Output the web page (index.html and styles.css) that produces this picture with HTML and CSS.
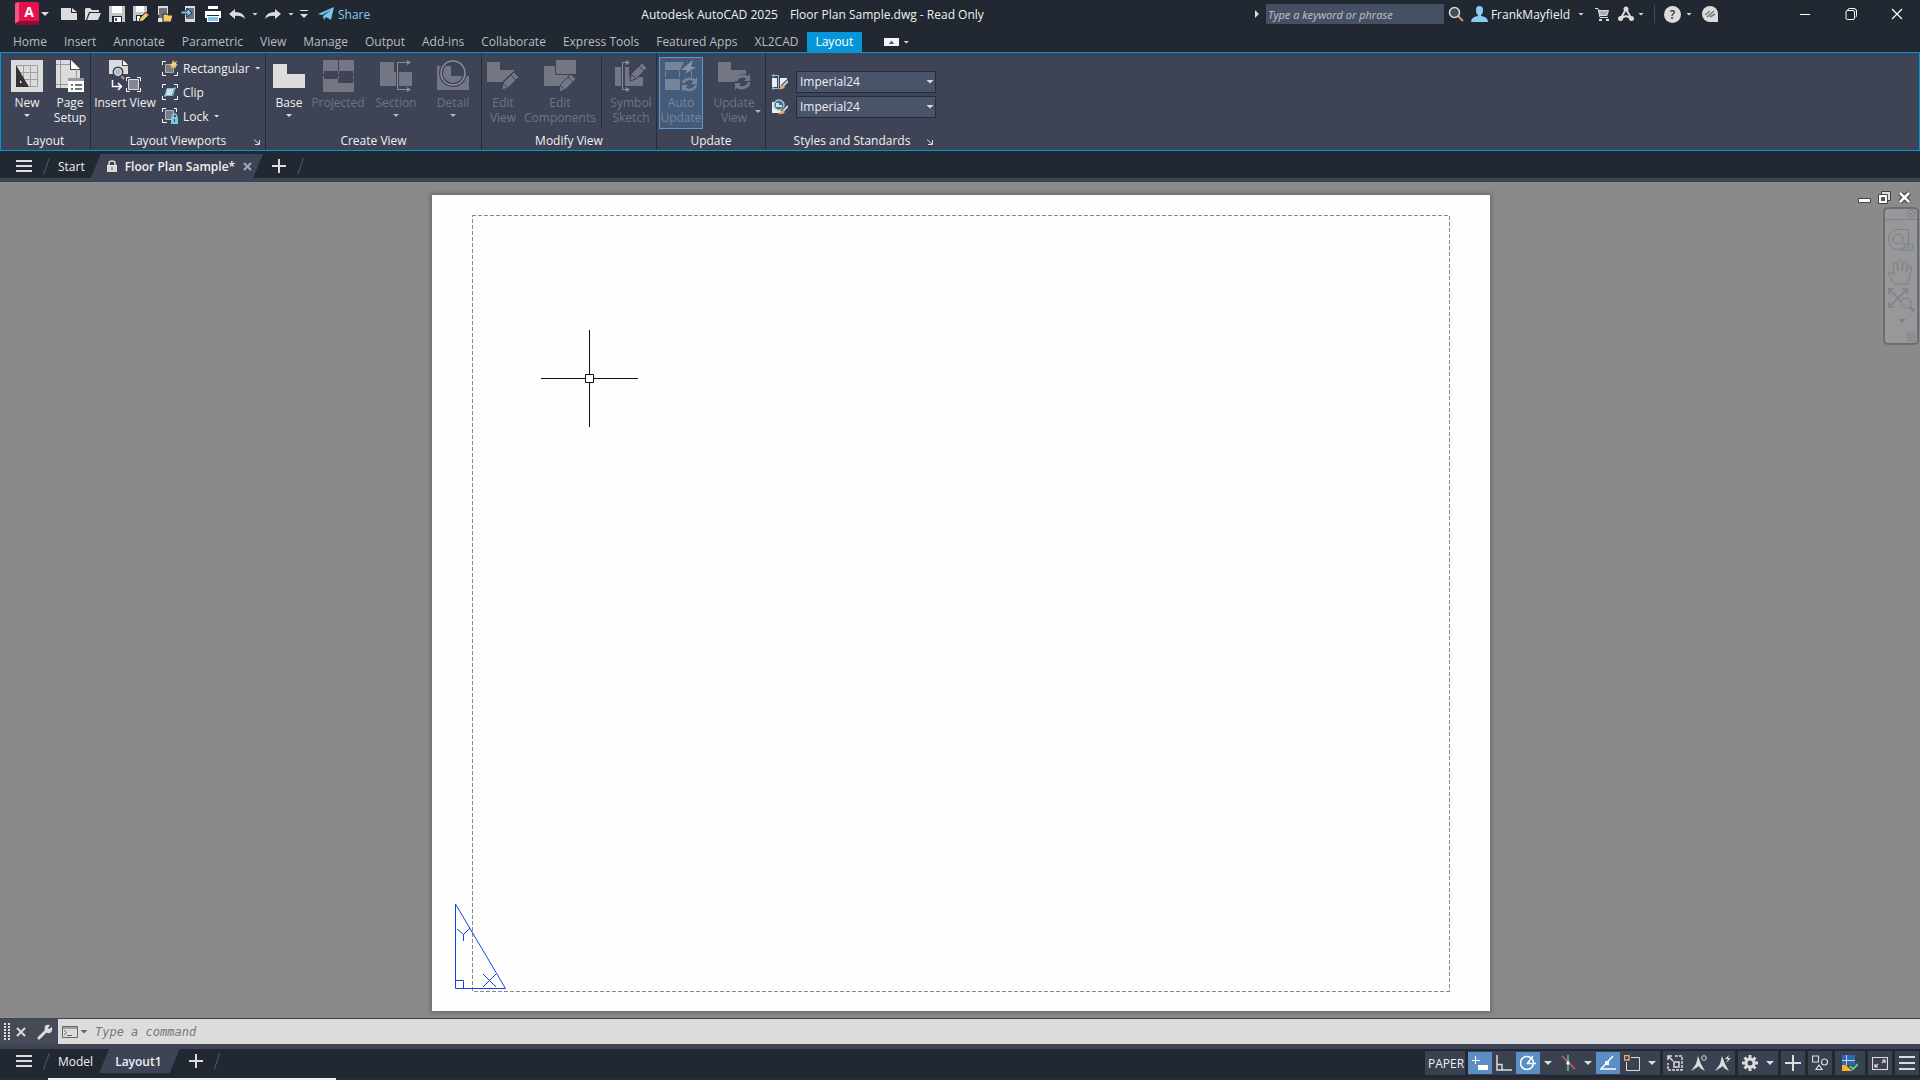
FILE: index.html
```html
<!DOCTYPE html>
<html lang="en">
<head>
    <meta charset="UTF-8">
    <title>Autodesk AutoCAD 2025 - Floor Plan Sample.dwg</title>
    <link rel="stylesheet" href="styles.css">
</head>
<body>
    <header class="titlebar">
        <div class="quick-access">
            <button class="app-button" aria-label="Application menu">
                <svg width="24" height="24" viewBox="0 0 24 24"><path fill="#e51050" d="M0 2Q0 0 2 0H22Q24 0 24 2V20H0z"/><path fill="#f0597f" d="M0 2L4 0V19L0 22z"/><path fill="#8e0d33" d="M0 22L4 19H24V21Q24 23 22 23H2z"/></svg>
                <span class="app-letter">A</span>
            </button>
            <button class="drop" aria-label="Application options"><i class="caret big"></i></button>
            <button class="qa first" aria-label="New"><svg viewBox="0 0 16 16"><path fill="#dcdcdc" d="M0 2H10V7H16V14H0z"/><path fill="#dcdcdc" d="M11 2L16 6H11z"/></svg></button>
            <button class="qa" aria-label="Open"><svg viewBox="0 0 16 16"><path fill="#dcdcdc" d="M0 14V3L1 2H5L7 4H14V6H4L1 14z"/><path fill="#dcdcdc" d="M5 7H16L13 14H2z"/></svg></button>
            <button class="qa" aria-label="Save"><svg viewBox="0 0 16 16"><path fill="#c4c5c8" d="M0 0H16V16H0z"/><path fill="#fff" d="M3 0H13V7H3z"/><path fill="#222933" d="M3 10H13V16H3z"/><path fill="#fff" d="M5 11H12V16H5z"/><path fill="#555" d="M6 12H8V15H6z"/></svg></button>
            <button class="qa" aria-label="Save As"><svg viewBox="0 0 16 16"><path fill="#c4c5c8" d="M0 0H14V8L8 15H0z"/><path fill="#fff" d="M3 0H11V6H3z"/><path fill="#222933" d="M3 9H10L6 15H3z"/><path fill="#fff" d="M4 10H7V15H4z"/><path fill="#f3c766" stroke="#222933" d="M7 12L13 6L16 9L10 15L6 16z"/><path fill="#ec6b76" d="M12 7L13 6L16 9L15 10z"/></svg></button>
            <button class="qa" aria-label="Open from Web and Mobile"><svg viewBox="0 0 16 16"><path fill="#dcdcdc" d="M1 0H11V9H1z"/><path fill="#71757e" d="M2 2H10V12H2z"/><path fill="#dcdcdc" d="M1 12H7V16H1z"/><path fill="#f3c766" stroke="#222933" d="M6 8H10L11 9H16L14 16H6z"/></svg></button>
            <button class="qa" aria-label="Save to Web and Mobile"><svg viewBox="0 0 16 16"><path fill="#dcdcdc" d="M4 0H14V16H4z"/><path fill="#71757e" d="M5 2H13V13H5z"/><path fill="#79c5ee" stroke="#222933" d="M0 5H6V2L11 7L6 11V8H0z"/></svg></button>
            <button class="qa" aria-label="Plot"><svg viewBox="0 0 16 16"><path fill="#fff" d="M3 0H13V3H3zM0 5H16V12H0z"/><path fill="#222933" d="M2 9H14V12H2z"/><path fill="#fff" d="M2 10H14V16H2z"/><path fill="#79c5ee" d="M3 11H13V15H3z"/></svg></button>
            <button class="qa" aria-label="Undo"><svg viewBox="0 0 16 16"><path fill="#dcdcdc" d="M0 8L6 3V6Q15 6 16 13Q12 9 6 10V13z"/></svg></button>
            <button class="drop" aria-label="Undo list"><i class="caret"></i></button>
            <button class="qa" aria-label="Redo"><svg viewBox="0 0 16 16"><path fill="#dcdcdc" d="M16 8L10 3V6Q1 6 0 13Q4 9 10 10V13z"/></svg></button>
            <button class="drop" aria-label="Redo list"><i class="caret"></i></button>
            <button class="drop wide" aria-label="Customize toolbar"><i class="caret over"></i></button>
            <button class="share">
                <svg width="16" height="16" viewBox="0 0 16 16"><path fill="#79c5ee" d="M0 8L16 1L13 14L8 11L6 14L5 10L13 4L4 9z"/></svg>
                Share
            </button>
        </div>
        <div class="title"><span>Autodesk AutoCAD 2025</span><span>Floor Plan Sample.dwg - Read Only</span></div>
        <div class="account">
            <i class="arrow-right"></i>
            <input class="search" type="text" placeholder="Type a keyword or phrase" aria-label="Search help">
            <button class="acc-icon" aria-label="Search"><svg viewBox="0 0 16 16"><path stroke="#c89a70" stroke-width="2" d="M10 10L15 15"/><circle cx="6.500" cy="6.500" r="5" fill="#444b59" stroke="#dcdcdc" stroke-width="1.500"/></svg></button>
            <button class="user">
                <svg width="17" height="17" viewBox="0 0 17 17"><path fill="#8bcdf0" d="M5 4Q5 0 8.500 0Q12 0 12 4Q12 8 10 9V10Q17 11 17 16H0Q0 11 7 10V9Q5 8 5 4z"/></svg>
                FrankMayfield
                <i class="caret"></i>
            </button>
            <button class="acc-icon" aria-label="App Store"><svg viewBox="0 0 16 16"><path fill="none" stroke="#dcdcdc" d="M1 2.500H4L6 11.500H14"/><path fill="#aaadb3" stroke="#dcdcdc" d="M5 4.500H14.500L13 9.500H6z"/><path fill="#dcdcdc" d="M5 13H8V15H5zM12 13H15V15H12z"/></svg></button>
            <button class="acc-icon" aria-label="Autodesk services"><svg viewBox="0 0 16 16"><path fill="none" stroke="#dcdcdc" stroke-width="2" d="M8 3L3 12M8 3L13 12M3 12L8 10L13 12"/><circle cx="8" cy="3" r="2.500" fill="#dcdcdc"/><circle cx="2.500" cy="12.500" r="2.500" fill="#dcdcdc"/><circle cx="13.500" cy="12.500" r="2.500" fill="#dcdcdc"/></svg></button>
            <button class="drop" aria-label="Services list"><i class="caret"></i></button>
            <i class="divider"></i>
            <button class="help" aria-label="Help">?</button>
            <button class="drop" aria-label="Help list"><i class="caret"></i></button>
            <button class="acc-icon" aria-label="Assistant"><svg viewBox="0 0 16 16"><path fill="#dcdcdc" d="M8 0A8 8 0 0 1 16 8V16H8A8 8 0 0 1 8 0"/><path stroke="#777" stroke-width="1.500" d="M3 9L8 5M5 11L12 5M8 11L13 8"/></svg></button>
        </div>
        <div class="window-buttons">
            <button aria-label="Minimize"><svg viewBox="0 0 12 12"><path stroke="#fff" d="M1 6.500H11"/></svg></button>
            <button aria-label="Restore"><svg viewBox="0 0 12 12"><path fill="none" stroke="#fff" d="M3 2V1.500Q3 .5 4.500 .5H9Q11.500 .5 11.500 3V7.500Q11.500 9 10.500 9M2 2.500H8Q9.500 2.500 9.500 4V10Q9.500 11.500 8 11.500H2.500Q1 11.500 1 10V4Q1 2.500 2.500 2.500"/></svg></button>
            <button aria-label="Close"><svg viewBox="0 0 12 12"><path stroke="#fff" stroke-width="1.200" d="M1 1L11 11M11 1L1 11"/></svg></button>
        </div>
    </header>

    <nav class="ribbon-tabs">
        <a href="#">Home</a>
        <a href="#">Insert</a>
        <a href="#">Annotate</a>
        <a href="#">Parametric</a>
        <a href="#">View</a>
        <a href="#">Manage</a>
        <a href="#">Output</a>
        <a href="#">Add-ins</a>
        <a href="#">Collaborate</a>
        <a href="#">Express Tools</a>
        <a href="#">Featured Apps</a>
        <a href="#">XL2CAD</a>
        <a href="#" class="active">Layout</a>
        <button class="ribbon-toggle" aria-label="Minimize ribbon"><svg width="15" height="8" viewBox="0 0 15 8"><path fill="#f4f4f4" d="M0 0H15V8H0z"/><path fill="#555" d="M5 6L7.500 2.500L10 6z"/></svg><i class="caret"></i></button>
    </nav>

    <section class="ribbon">
        <div class="panel p-layout">
            <div class="tools">
                <button class="tool">
                    <svg viewBox="0 0 32 32"><path fill="#dcdcdc" d="M0 0H32V32H0z"/><path fill="none" stroke="#a0a0a0" d="M5.500 5.500H26.500V26.500H5.500zM12.500 5V27M19.500 5V27M5 12.500H27M5 19.500H27"/><path fill="#333" d="M5 5L18 27H5z"/><path fill="#fff" d="M9 20L11 23H9z"/></svg>
                    <span>New</span><i class="caret"></i>
                </button>
                <button class="tool">
                    <svg viewBox="0 0 32 32"><path fill="#dcdcdc" d="M2 0H16V10H26V18H14V28H2z"/><path fill="#fff" d="M17 0L26 9H17z"/><path fill="none" stroke="#999" d="M6.500 0V28M2 4.500H16M2 24.500H14M22.500 9V18"/><path fill="#fff" d="M14 18H30V32H14z"/><path fill="#999" d="M14 18H30V21H14z"/><path stroke="#444" stroke-width="1.500" d="M17 25H19M21 25H28M17 29H19M21 29H28"/></svg>
                    <span>Page<br>Setup</span>
                </button>
            </div>
            <h2>Layout</h2>
        </div>

        <div class="panel p-viewports">
            <div class="tools">
                <button class="tool">
                    <svg viewBox="0 0 32 32"><path fill="#dcdcdc" d="M0 0H13V6H19V14H0z"/><path fill="#fff" d="M14 0L19 5H14z"/><path stroke="#c89a70" stroke-width="2" d="M11 15L15 19"/><circle cx="9" cy="12" r="4.500" fill="#a8bbc7" stroke="#3e4455" stroke-width="2"/><circle cx="9" cy="12" r="3.500" fill="none" stroke="#eee"/><path fill="none" stroke="#fff" stroke-width="1.500" d="M3.500 20V26.500H12M9 23L12.500 26.500L9 30"/><path fill="#858894" stroke="#dcdcdc" d="M19.500 19.500H29.500V29.500H19.500z"/><path fill="none" stroke="#fff" d="M17.500 21V17.500H21M28 17.500H31.500V21M31.500 28V31.500H28M21 31.500H17.500V28"/></svg>
                    <span>Insert View</span>
                </button>
                <div class="small-tools">
                    <button><svg viewBox="0 0 16 16"><path fill="#777b86" stroke="#aaa" d="M3.500 4.500H11.500V12.500H3.500z"/><path fill="none" stroke="#fff" d="M.5 5V1.500H4M.5 12V15.500H4M12 15.500H15.500V12"/><path fill="#f5cf76" d="M11 0L12.500 2.500L15 1L14 4L16 5L13.500 6L14 8.500L11.500 7L9 8.500L9.500 6L7 4.500L10 3.500z"/></svg>Rectangular<i class="caret"></i></button>
                    <button><svg viewBox="0 0 16 16"><path fill="#dcdcdc" d="M5 5H12L10 11H3z"/><path fill="none" stroke="#6cc9eb" d="M2 11.500H11L13 3M14 4.500H5L3 13"/><path fill="none" stroke="#fff" d="M.5 4V.5H4M12 .5H15.500V4M15.500 12V15.500H12M4 15.500H.5V12"/></svg>Clip</button>
                    <button><svg viewBox="0 0 16 16"><path fill="#777b86" stroke="#bbb" d="M3.500 2.500H11.500V11.500H3.500z"/><path fill="none" stroke="#fff" d="M.5 4V.5H4M12 .5H14.500V4M5 14.500H.5V11"/><path fill="#70cde4" d="M9 9H16V16H9z"/><path fill="none" stroke="#70cde4" stroke-width="1.500" d="M10.500 10V7Q12.500 5 14.500 7V10"/><path fill="#3e4455" d="M12 11H13V14H12z"/></svg>Lock<i class="caret"></i></button>
                </div>
            </div>
            <h2>Layout Viewports</h2>
            <button class="launcher" aria-label="Layout Viewports dialog"><svg viewBox="0 0 6 6"><path fill="none" stroke="#dcdcdc" d="M0 .5L5 5M1 5.500H5.500V1"/></svg></button>
        </div>

        <div class="panel p-create">
            <div class="tools">
                <button class="tool">
                    <svg viewBox="0 0 32 32"><path fill="#dcdcdc" d="M0 4H14V14H32V28H0z"/></svg>
                    <span>Base</span><i class="caret"></i>
                </button>
                <button class="tool" disabled>
                    <svg viewBox="0 0 32 32"><path fill="#737783" d="M1 0H16V11H1zM17 0H32V11H17zM1 19H16V23H32V32H1z"/><path stroke="#737783" stroke-dasharray="3 2" d="M1.500 11V19M16.500 11V19M31.500 11V23"/></svg>
                    <span>Projected</span>
                </button>
                <button class="tool" disabled>
                    <svg viewBox="0 0 32 32"><path fill="#737783" d="M0 2H14V12H16V26H0zM19 12H32V26H19z"/><path fill="none" stroke="#8b8e98" d="M27 2.500H17.500V29.500H27"/><path fill="#8b8e98" d="M27 0L31 2.500L27 5zM27 27L31 29.500L27 32z"/></svg>
                    <span>Section</span><i class="caret"></i>
                </button>
                <button class="tool" disabled>
                    <svg viewBox="0 0 32 32"><path fill="#737783" d="M0 6H14V16H32V30H0z"/><circle cx="16" cy="13" r="12" fill="none" stroke="#3e4455" stroke-width="4"/><circle cx="16" cy="13" r="12" fill="none" stroke="#8b8e98" stroke-width="1.500"/></svg>
                    <span>Detail</span><i class="caret"></i>
                </button>
            </div>
            <h2>Create View</h2>
        </div>

        <div class="panel p-modify">
            <div class="tools">
                <button class="tool" disabled>
                    <svg viewBox="0 0 32 32"><path fill="#737783" d="M0 2H13V10H28L15 22H0z"/><path fill="#737783" stroke="#3e4455" d="M16 23L27 12L32 17L21 28L15 30z"/><path stroke="#3e4455" d="M24 15L29 20M16 23L21 28"/></svg>
                    <span>Edit<br>View</span>
                </button>
                <button class="tool" disabled>
                    <svg viewBox="0 0 32 32"><path fill="#737783" d="M0 6H11V15H29L18 26H0z"/><path fill="#737783" stroke="#3e4455" d="M11.500 -.5H32.500V14.500H11.500z"/><path fill="#737783" stroke="#3e4455" d="M16 25L27 14L32 19L21 30L15 32z"/><path stroke="#3e4455" d="M24 17L29 22M16 25L21 30"/></svg>
                    <span>Edit<br>Components</span>
                </button>
                <i class="tool-divider"></i>
                <button class="tool" disabled>
                    <svg viewBox="0 0 32 32"><path fill="#737783" d="M0 7H6V26H0zM10 7H14V17H28V26H10z"/><path fill="none" stroke="#8b8e98" d="M11 2.500H7.500V29.500H11"/><path fill="#8b8e98" d="M11 0L15 2.500L11 5zM11 27L15 29.500L11 32z"/><path fill="#737783" stroke="#3e4455" d="M16 14L27 3L32 8L21 19L15 21z"/><path stroke="#3e4455" d="M24 6L29 11M16 14L21 19"/></svg>
                    <span>Symbol<br>Sketch</span>
                </button>
            </div>
            <h2>Modify View</h2>
        </div>

        <div class="panel p-update">
            <div class="tools">
                <button class="tool pressed" disabled>
                    <svg viewBox="0 0 32 32"><path fill="#77859b" d="M0 2H19L15 10H0zM0 19H15V30H0z"/><path stroke="#77859b" stroke-dasharray="6 2" d="M.5 11V18M14.500 11V18M26.500 11V18"/><path fill="#8794a8" d="M28 0L16 10H22L20 14L31 7H26z"/><path fill="none" stroke="#77859b" stroke-width="2.500" d="M18 23A7 6 0 0 1 30 21M31 25A7 6 0 0 1 19 28"/><path fill="#77859b" d="M32 17V24H26zM17 32V25H23z"/></svg>
                    <span>Auto<br>Update</span>
                </button>
                <button class="tool" disabled>
                    <svg viewBox="0 0 32 32"><path fill="#737783" d="M0 2H13V10H28V14Q18 13 17 22H0z"/><path fill="none" stroke="#737783" stroke-width="3" d="M18 21A7 6 0 0 1 30 18M31 22A7 6 0 0 1 19 26"/><path fill="#737783" d="M32 14V21H26zM17 30V23H23z"/></svg>
                    <span>Update<br>View</span><i class="caret side"></i>
                </button>
            </div>
            <h2>Update</h2>
        </div>

        <div class="panel p-styles">
            <div class="style-rows">
                <label for="section-style"><svg viewBox="0 0 16 16"><path fill="#eee" d="M0 4H5V13H0zM8 4H15V9L11 13H8z"/><path fill="none" stroke="#79c5ee" d="M0 1.500H6.500V14.500H0M2 0L0 1.500L2 3M2 13L0 14.500L2 16"/><path stroke="#3e4455" stroke-width="4" d="M16 7L10 13"/><path stroke="#d0d0d0" stroke-width="2" d="M16 7L11 12"/><path fill="#e9a564" d="M11 11L13 13Q11 16 6 15Q9 14 9 12z"/></svg></label>
                <span class="select-wrap"><select id="section-style"><option>Imperial24</option></select><i class="caret big"></i></span>
                <label for="detail-style"><svg viewBox="0 0 16 16"><path fill="#eee" d="M0 3H3V9H12L8 14H0z"/><circle cx="7" cy="6" r="5" fill="#59677b" stroke="#8bd0f0" stroke-width="1.500"/><path fill="#dcdcdc" d="M4 4H7V6H10V8H4z"/><path stroke="#3e4455" stroke-width="4" d="M16 7L10 13"/><path stroke="#d0d0d0" stroke-width="2" d="M16 7L11 12"/><path fill="#e9a564" d="M11 11L13 13Q11 16 6 15Q9 14 9 12z"/></svg></label>
                <span class="select-wrap"><select id="detail-style"><option>Imperial24</option></select><i class="caret big"></i></span>
            </div>
            <h2>Styles and Standards</h2>
            <button class="launcher" aria-label="Styles and Standards dialog"><svg viewBox="0 0 6 6"><path fill="none" stroke="#dcdcdc" d="M0 .5L5 5M1 5.500H5.500V1"/></svg></button>
        </div>
    </section>

    <nav class="file-tabs">
        <button class="hamburger" aria-label="File tab menu"><svg width="16" height="12" viewBox="0 0 16 12"><path fill="#dcdcdc" d="M0 0H16V2H0zM0 5H16V7H0zM0 10H16V12H0z"/></svg></button>
        <i class="slash"></i>
        <a href="#">Start</a>
        <a href="#" class="current">
            <svg width="10" height="12" viewBox="0 0 10 12"><path fill="#dcdcdc" d="M0 5H10V12H0z"/><path fill="none" stroke="#dcdcdc" stroke-width="1.500" d="M2 6V3Q2 1 5 1Q8 1 8 3V6"/><path fill="#555" d="M4.500 7H5.500V10H4.500z"/></svg>
            Floor Plan Sample*
            <svg class="close" width="9" height="9" viewBox="0 0 9 9"><path stroke="#a5a8b0" stroke-width="2" d="M1 1L8 8M8 1L1 8"/></svg>
        </a>
        <button class="plus" aria-label="New drawing"><svg width="14" height="14" viewBox="0 0 14 14"><path fill="#dcdcdc" d="M6 0H8V6H14V8H8V14H6V8H0V6H6z"/></svg></button>
        <i class="slash"></i>
    </nav>

    <main class="canvas">
        <div class="sheet">
            <svg class="margins"><rect width="100%" height="100%"/></svg>
            <svg class="ucs" viewBox="0 0 52 87"><path d="M.5 1V85.500H50.500zM.5 77.500H8.500V85.500M2 26L8.500 31.500L15 25M8.500 31.500V38M28 71L41 84M41 71L28 84"/></svg>
        </div>
        <svg class="crosshair" viewBox="0 0 97 97"><path d="M0 48.500H44M53 48.500H97M48.500 0V44M48.500 53V97M44.500 44.500H52.500V52.500H44.500z"/></svg>
        <div class="doc-buttons">
            <button aria-label="Minimize drawing"><svg viewBox="0 0 13 13"><path fill="#fff" stroke="#444" d="M.5 7.500H12.500V11.500H.5z"/></svg></button>
            <button aria-label="Restore drawing"><svg viewBox="0 0 13 13"><path fill="#ddd" stroke="#444" d="M3.500 .5H12.500V9.500H3.500z"/><path fill="#fff" stroke="#444" d="M.5 3.500H9.500V12.500H.5z"/><path fill="#555" d="M3 6H7V10H3z"/></svg></button>
            <button aria-label="Close drawing"><svg viewBox="0 0 13 13"><path stroke="#444" stroke-width="5" d="M2 2L11 11M11 2L2 11"/><path stroke="#fff" stroke-width="2.500" d="M2 2L11 11M11 2L2 11"/></svg></button>
        </div>
        <div class="navbar">
            <svg width="32" height="134" viewBox="0 0 32 134"><g fill="none" stroke="#808084"><path d="M0 10.500H32"/><circle cx="26" cy="5" r="4"/><path d="M24 3L28 7M28 3L24 7"/><path d="M13 20.500H23.500V31A10 10 0 1 1 13 20.500"/><circle cx="13" cy="30" r="5"/><path d="M9 75Q6 68 3 64Q5 61 9 66L8 55Q11 52 12 56L13 62L13 52Q16 49 17 53V62L19 53Q22 51 22 55L21 63L24 57Q28 56 26 61L23 75z"/><path stroke-width="1.500" d="M5 81L21 97M21 81L5 97M4 85V80H9M17 80H22V85M4 93V98H9"/><circle cx="21" cy="94" r="5" fill="#98989b"/><path stroke-width="3" d="M25 98L29 102"/><circle cx="26" cy="128" r="4"/><path d="M24 127H28M24 129H28"/></g><path fill="#808084" d="M13 110H21L17 114z"/></svg>
            <span class="nav-2d">2D</span>
        </div>
    </main>

    <div class="command-line">
        <svg class="grip" width="6" height="17" viewBox="0 0 6 17"><path stroke="#ddd" stroke-width="2" stroke-dasharray="2 1" d="M1 0V17M5 0V17"/></svg>
        <button aria-label="Close command line"><svg width="10" height="10" viewBox="0 0 10 10"><path stroke="#dcdcdc" stroke-width="2" d="M1 1L9 9M9 1L1 9"/></svg></button>
        <button aria-label="Customize command line"><svg width="16" height="16" viewBox="0 0 16 16"><path stroke="#dcdcdc" stroke-width="3" stroke-linecap="round" d="M2 14L10 6"/><path fill="#dcdcdc" d="M8 2Q10 0 13 1L11 4L12 5L15 3Q16 7 13 9Q10 10 8 7Q7 4 8 2"/></svg></button>
        <div class="command-field">
            <svg width="16" height="12" viewBox="0 0 16 12"><path fill="none" stroke="#666" d="M.5 .5H15.500V11.500H.5zM0 2H16M2 4L4.500 6.500L2 9M5 9.500H10"/></svg>
            <i class="caret dark"></i>
            <input type="text" placeholder="Type a command" aria-label="Command">
        </div>
    </div>

    <footer class="statusbar">
        <nav class="layout-tabs">
            <button class="hamburger" aria-label="Layout tab menu"><svg width="16" height="12" viewBox="0 0 16 12"><path fill="#dcdcdc" d="M0 0H16V2H0zM0 5H16V7H0zM0 10H16V12H0z"/></svg></button>
            <i class="slash"></i>
            <a href="#">Model</a>
            <a href="#" class="current">Layout1</a>
            <button class="plus" aria-label="New layout"><svg width="14" height="14" viewBox="0 0 14 14"><path fill="#dcdcdc" d="M6 0H8V6H14V8H8V14H6V8H0V6H6z"/></svg></button>
            <i class="slash"></i>
        </nav>
        <div class="status-tools">
            <div class="group"><button class="paper">PAPER</button></div>
            <div class="group">
                <button class="on" aria-label="Dynamic input"><svg viewBox="0 0 16 16"><path fill="#fff" d="M3 1H4V5H8V6H4V9H3V6H0V5H3zM6 10H16V15H6z"/></svg></button>
                <button aria-label="Ortho mode"><svg viewBox="0 0 16 16"><path fill="none" stroke="#dcdcdc" stroke-width="1.500" d="M1 0V15H16M1 9.500H6V15"/></svg></button>
                <button class="on" aria-label="Polar tracking"><svg viewBox="0 0 16 16"><circle cx="7" cy="8" r="6.500" fill="none" stroke="#fff" stroke-width="1.500"/><path stroke="#fff" stroke-width="1.500" d="M7 9L13 1M7 8.500H16"/></svg></button>
                <button class="drop" aria-label="Polar angles"><i class="caret big"></i></button>
                <button aria-label="Isometric drafting"><svg viewBox="0 0 16 16"><path stroke="#e65370" stroke-width="1.500" d="M2 1L15 14"/><path stroke="#59c79c" stroke-width="1.500" d="M8 0V16"/><path fill="#fff" d="M6.500 6.500H9.500V9.500H6.500z"/></svg></button>
                <button class="drop" aria-label="Isoplanes"><i class="caret big"></i></button>
                <button class="on" aria-label="Object snap tracking"><svg viewBox="0 0 16 16"><path fill="none" stroke="#fff" stroke-width="1.500" d="M13 1L1 14H16"/><path fill="#fff" d="M5 6H9V10H5z"/></svg></button>
                <button aria-label="Object snap"><svg viewBox="0 0 16 16"><path fill="none" stroke="#dcdcdc" d="M7 2.500H15.500V15.500H2.500V7"/><path fill="none" stroke="#f0a66f" stroke-width="1.500" d="M.5 .5H5V5H.5z"/></svg></button>
                <button class="drop" aria-label="Snap settings"><i class="caret big"></i></button>
            </div>
            <div class="group">
                <button aria-label="Annotation monitor"><svg viewBox="0 0 16 16"><path fill="none" stroke="#dcdcdc" stroke-width="1.500" stroke-dasharray="3 1" d="M8 1H15V15H1V8"/><path fill="none" stroke="#dcdcdc" stroke-width="1.500" d="M7 7H12V12H7zM1 1L6 6M1 5V1H5"/></svg></button>
                <button aria-label="Annotation visibility"><svg viewBox="0 0 16 16"><path fill="#dcdcdc" d="M7 1L10 9L14 16L9 13L8 11L5 13L0 16L5 9z"/><circle cx="13" cy="3" r="2.300" fill="none" stroke="#dcdcdc"/></svg></button>
                <button aria-label="Auto scale"><svg viewBox="0 0 16 16"><path fill="#dcdcdc" d="M7 1L10 9L14 16L9 13L8 11L5 13L0 16L5 9zM14 0L10 4H13L11 8L16 3H13z"/></svg></button>
            </div>
            <div class="group">
                <button aria-label="Workspace"><svg viewBox="0 0 16 16"><circle cx="8" cy="8" r="4" fill="none" stroke="#dcdcdc" stroke-width="3"/><path stroke="#dcdcdc" stroke-width="3" d="M8 0V4M8 12V16M0 8H4M12 8H16M2.500 2.500L5 5M11 11L13.500 13.500M13.500 2.500L11 5M5 11L2.500 13.500"/></svg></button>
                <button class="drop" aria-label="Workspace list"><i class="caret big"></i></button>
            </div>
            <div class="group"><button aria-label="Annotation monitor toggle"><svg viewBox="0 0 16 16"><path fill="#dcdcdc" d="M7 0H9V7H16V9H9V16H7V9H0V7H7z"/></svg></button></div>
            <div class="group"><button aria-label="Isolate objects"><svg viewBox="0 0 16 16"><path fill="none" stroke="#dcdcdc" stroke-width="1.200" d="M.5 1H6.500V7H.5zM4 14.500H10L7 10z"/><circle cx="12.500" cy="7" r="3" fill="none" stroke="#dcdcdc" stroke-width="1.200"/></svg></button></div>
            <div class="group"><button class="wide" aria-label="Graphics performance"><svg viewBox="0 0 16 16"><path fill="#2f68ac" d="M0 0H13V10H0z"/><path stroke="#b8d9f4" d="M0 5.500H13M4.500 0V10"/><path fill="#f6b52b" d="M0 10H4L10 16H0z"/><path fill="none" stroke="#4ad08f" stroke-width="2" d="M8 11L11 14L16 9"/></svg></button></div>
            <div class="group"><button aria-label="Clean screen"><svg viewBox="0 0 16 16"><path fill="none" stroke="#dcdcdc" stroke-width="1.200" d="M.5 2.500H15.500V14.500H.5zM3 9V12H6M3 12L6 9M10 5H13V8M13 5L10 8"/></svg></button></div>
            <div class="group"><button aria-label="Customization"><svg viewBox="0 0 16 16"><path fill="#dcdcdc" d="M0 1H16V3H0zM0 7H16V9H0zM0 13H16V15H0z"/></svg></button></div>
        </div>
    </footer>
    <div class="desktop-edge"><i class="edge-search"></i></div>
</body>
</html>
```

FILE: styles.css
```css
* {
    box-sizing: border-box;
}

body {
    margin: 0;
    height: 100vh;
    display: flex;
    flex-direction: column;
    overflow: hidden;
    background: #212831;
    color: #f0f0f0;
    font: 12px/15px "Open Sans", "Noto Sans", sans-serif;
}

a {
    color: inherit;
    text-decoration: none;
}

button {
    padding: 0;
    border: 0;
    background: none;
    color: inherit;
    font: inherit;
    white-space: nowrap;
}

svg {
    display: block;
    flex: none;
}

.caret {
    flex: none;
    width: 6px;
    height: 3px;
    background: #dcdcdc;
    clip-path: polygon(0 0, 100% 0, 50% 100%);
}

.caret.big {
    width: 8px;
    height: 4px;
}

.caret.dark {
    width: 8px;
    height: 4px;
    background: #666;
}

.caret.over {
    width: 8px;
    height: 8px;
    clip-path: polygon(0 0, 100% 0, 100% 1px, 0 1px, 0 4px, 100% 4px, 50% 100%, 0 4px);
}

.drop {
    display: flex;
    justify-content: center;
    align-items: center;
    width: 12px;
}

/* title bar */
.titlebar {
    display: flex;
    align-items: center;
    height: 28px;
    padding-left: 15px;
}

.quick-access,
.account,
.window-buttons,
.share,
.user {
    display: flex;
    align-items: center;
}

.app-button {
    position: relative;
}

.app-letter {
    position: absolute;
    left: 4px;
    right: 0;
    top: 2px;
    font-size: 14px;
    font-weight: bold;
    line-height: 16px;
    text-align: center;
    color: #fff;
}

.qa {
    width: 24px;
    padding: 0 4px;
}

.qa.first {
    margin-left: 6px;
}

.drop.wide {
    width: 14px;
}

.share {
    gap: 4px;
    margin-left: 7px;
    color: #83cdf2;
}

.title {
    flex: 1;
    display: flex;
    justify-content: center;
    gap: 12px;
    white-space: nowrap;
}

.arrow-right {
    width: 4px;
    height: 8px;
    margin-right: 7px;
    background: #dcdcdc;
    clip-path: polygon(0 0, 100% 50%, 0 100%);
}

.search {
    width: 178px;
    height: 20px;
    padding: 0 2px;
    border: 0;
    background: #465065;
    color: #fff;
    font: italic 11px/15px "Open Sans", "Noto Sans", sans-serif;
}

.search::placeholder {
    color: #c0c3c8;
}

.acc-icon {
    width: 24px;
    padding: 0 4px;
}

.account .drop {
    justify-content: flex-start;
}

.user {
    gap: 3px;
    margin-left: 3px;
}

.user .caret {
    margin: 0 6px 0 5px;
}

.divider {
    width: 1px;
    height: 18px;
    margin: 0 9px 0 4px;
    background: #454c59;
}

.help {
    width: 17px;
    height: 17px;
    margin-right: 5px;
    border-radius: 50%;
    background: #dcdcdc;
    color: #333;
    font-weight: 600;
}

.window-buttons {
    margin-left: 60px;
}

.window-buttons button {
    width: 46px;
    padding: 0 17px;
}

/* ribbon tabs */
.ribbon-tabs {
    display: flex;
    height: 24px;
    padding: 4px 5px 0;
    color: #b9bcc0;
}

.ribbon-tabs a {
    padding: 2px 9px 3px 8px;
}

.ribbon-tabs .active {
    background: #0696d7;
    color: #fff;
}

.ribbon-toggle {
    display: flex;
    align-items: center;
    gap: 4px;
    margin-left: 22px;
}

/* ribbon */
.ribbon {
    display: flex;
    height: 99px;
    border: 1px solid #0696d7;
    background: #3e4455;
}

.panel {
    position: relative;
    display: flex;
    flex-direction: column;
    border-right: 1px solid #272d38;
}

.panel h2 {
    margin: 0;
    font-size: 12px;
    font-weight: normal;
    line-height: 18px;
    text-align: center;
}

.tools {
    flex: 1;
    display: grid;
    align-items: start;
    padding-top: 4px;
}

.p-layout {
    width: 90px;
}

.p-layout .tools {
    grid-template-columns: 52px 34px;
}

.p-viewports {
    width: 175px;
}

.p-viewports .tools {
    grid-template-columns: 68px 1fr;
}

.p-create {
    width: 216px;
}

.p-create .tools {
    grid-template-columns: 46px 52px 64px 50px;
}

.p-modify {
    width: 175px;
}

.p-modify .tools {
    grid-template-columns: 42px 72px 10px 1fr;
}

.p-update {
    width: 109px;
}

.p-update .tools {
    grid-template-columns: 46px 1fr;
}

.p-styles {
    width: 172px;
    border-right: 0;
}

.tool {
    position: relative;
    display: flex;
    flex-direction: column;
    align-items: center;
    height: 72px;
    padding-top: 3px;
}

.tool svg {
    width: 32px;
    height: 32px;
    margin-bottom: 3px;
}

.tool .caret {
    margin-top: 4px;
}

.tool:disabled {
    color: #70747f;
}

.tool:disabled .caret {
    background: #b4b6bc;
}

.tool.pressed {
    margin-left: 2px;
    border: 1px solid #5b9bd0;
    padding-top: 2px;
    background: #455b7a;
    color: #77859b;
}

.tool .side {
    position: absolute;
    right: 4px;
    bottom: 16px;
}

.tool-divider {
    justify-self: center;
    width: 1px;
    height: 72px;
    background: #272d38;
}

.small-tools {
    display: flex;
    flex-direction: column;
    gap: 8px;
    padding: 3px 0 0 3px;
}

.small-tools button {
    display: flex;
    align-items: center;
    gap: 5px;
    height: 16px;
}

.small-tools svg {
    width: 16px;
    height: 16px;
}

.launcher {
    position: absolute;
    right: 5px;
    bottom: 5px;
    width: 6px;
}

.style-rows {
    flex: 1;
    display: grid;
    grid-template-columns: 16px 1fr;
    grid-auto-rows: 21px;
    align-items: center;
    gap: 4px 8px;
    padding: 18px 2px 0 6px;
}

.select-wrap {
    position: relative;
    height: 22px;
}

.select-wrap select {
    width: 100%;
    height: 22px;
    padding: 0 3px;
    border: 1px solid #272d38;
    background: #49536a;
    color: #f0f0f0;
    font: inherit;
    appearance: none;
}

.select-wrap .caret {
    position: absolute;
    right: 2px;
    top: 9px;
}

/* file tabs and layout tabs */
.file-tabs,
.layout-tabs {
    display: flex;
    align-items: center;
    padding-left: 16px;
}

.file-tabs {
    height: 31px;
    border-bottom: 4px solid #3e4455;
    padding-top: 3px;
}

.slash {
    width: 7px;
    height: 17px;
    margin: 0 8px 0 11px;
    background: #565c68;
    clip-path: polygon(6px 0, 100% 0, 1px 100%, 0 100%);
}

.current {
    display: flex;
    align-items: center;
    height: 24px;
    margin-left: 6px;
    padding: 0 18px 0 16px;
    background: #3e4455;
    clip-path: polygon(10px 0, 100% 0, calc(100% - 10px) 100%, 0 100%);
    font-weight: 600;
}

.file-tabs .current {
    gap: 8px;
    padding: 0 11px 0 16px;
}

.plus {
    margin-left: 9px;
}

/* drawing area */
.canvas {
    position: relative;
    flex: 1;
    min-height: 0;
    display: flex;
    justify-content: center;
    padding: 13px 0 7px 2px;
    background: #8a8a8a;
}

.sheet {
    position: relative;
    height: 100%;
    aspect-ratio: 1058 / 816;
    padding: 20px 41px 20px 40px;
    background: #fefefe;
    box-shadow: 0 0 4px 2px #6e6e6e;
}

.margins {
    width: 100%;
    height: 100%;
    overflow: visible;
}

.margins rect {
    fill: none;
    stroke: #8a8a8a;
    stroke-width: 1px;
    stroke-dasharray: 4 2;
    shape-rendering: crispEdges;
}

.ucs {
    position: absolute;
    left: 23px;
    bottom: 21px;
    width: 52px;
    height: 87px;
    fill: none;
    stroke: #1046e8;
}

.crosshair {
    position: absolute;
    left: 541px;
    top: 148px;
    width: 97px;
    height: 97px;
    fill: none;
    stroke: #111;
}

.doc-buttons {
    position: absolute;
    top: 9px;
    right: 9px;
    display: flex;
    gap: 7px;
}

.doc-buttons button {
    width: 13px;
}

.navbar {
    position: absolute;
    top: 25px;
    right: 1px;
    border: 2px solid #6c6c72;
    border-radius: 5px;
    background: #98989b;
}

.nav-2d {
    position: absolute;
    left: 16px;
    top: 32px;
    font-size: 10px;
    line-height: 12px;
    font-weight: bold;
    color: #7d8899;
}

/* command line */
.command-line {
    display: flex;
    align-items: center;
    gap: 6px;
    height: 31px;
    padding-left: 4px;
    border-top: 1px solid #3e4455;
    border-bottom: 5px solid #3e4455;
    background: #464a57;
}

.command-line button {
    width: 15px;
}

.command-field {
    flex: 1;
    display: flex;
    align-items: center;
    height: 25px;
    padding-left: 4px;
    gap: 2px;
    background: #dcdcdc;
}

.command-field input {
    flex: 1;
    border: 0;
    padding: 0 5px;
    background: none;
    color: #222;
    font: italic 12px/16px "DejaVu Sans Mono", monospace;
    outline: 0;
}

.command-field input::placeholder {
    color: #777;
}

/* status bar */
.statusbar {
    display: flex;
    justify-content: space-between;
    height: 29px;
}

.layout-tabs {
    height: 24px;
}

.status-tools {
    display: flex;
    gap: 3px;
    padding: 2px 1px 3px 0;
}

.group {
    display: flex;
    align-items: center;
    background: #3a4150;
}

.group button {
    width: 24px;
    height: 22px;
    padding: 0 4px;
}

.group .drop {
    width: 16px;
}

.group .wide {
    width: 30px;
    padding: 0 7px;
}

.group .paper {
    width: 40px;
    padding: 0 3px;
}

.group .on {
    background: #5b8ec4;
}

/* sliver of the desktop taskbar under the window */
.desktop-edge {
    display: flex;
    height: 2px;
    padding-left: 48px;
    background: #2e2e30;
}

.edge-search {
    width: 288px;
    background: #f2f2f2;
}
```
